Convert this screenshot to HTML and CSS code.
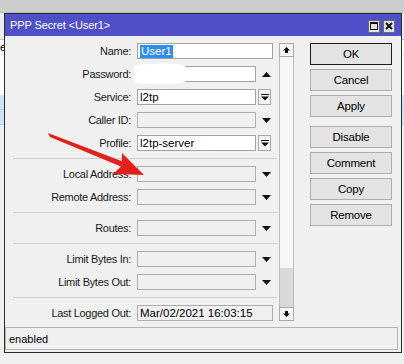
FILE: index.html
```html
<!DOCTYPE html>
<html lang="en">

<head>
  <meta charset="UTF-8">
  <meta name="viewport" content="width=device-width, initial-scale=1.0">
  <title>PPP Secret</title>
  <link rel="stylesheet" href="styles.css">
</head>

<body>

  <!-- ! desktop behind the dialog -->
  <div id="topbar"></div>
  <div id="backlist">
    <div class="bl-head"></div>
    <div class="bl-row"><span class="bl-cell">e</span></div>
    <div class="bl-gap"></div>
    <div class="bl-row blue"></div>
    <div class="bl-row blue"></div>
  </div>

  <!-- ! dialog -->
  <div id="window">
    <div id="titlebar">
      <span class="title">PPP Secret &lt;User1&gt;</span>
      <span class="title-buttons">
        <span class="tbtn">
          <svg width="8" height="8" viewBox="0 0 8 8">
            <rect x="0.5" y="0.5" width="7" height="7" fill="none" stroke="#111" stroke-width="1" />
            <rect x="0" y="0" width="8" height="2" fill="#111" />
          </svg>
        </span>
        <span class="tbtn">
          <svg width="8" height="8" viewBox="0 0 8 8">
            <path d="M1 1L7 7M7 1L1 7" stroke="#111" stroke-width="2" />
          </svg>
        </span>
      </span>
    </div>

    <div id="content">
      <div id="form">
        <div class="row">
          <label>Name:</label>
          <div class="field wide white"><span class="sel">User1</span></div>
        </div>
        <div class="row">
          <label>Password:</label>
          <div class="field white"></div>
          <span class="arrow"><svg width="9" height="5" viewBox="0 0 9 5"><path d="M4.5 0L9 5H0Z" /></svg></span>
        </div>
        <div class="row">
          <label>Service:</label>
          <div class="field white">l2tp</div>
          <span class="drop"><svg width="8" height="7" viewBox="0 0 8 7"><path d="M0 0H8V1H0ZM0 2.5H8L4 6.5Z" /></svg></span>
        </div>
        <div class="row">
          <label>Caller ID:</label>
          <div class="field"></div>
          <span class="arrow"><svg width="9" height="5" viewBox="0 0 9 5"><path d="M0 0H9L4.5 5Z" /></svg></span>
        </div>
        <div class="row">
          <label>Profile:</label>
          <div class="field white">l2tp-server</div>
          <span class="drop"><svg width="8" height="7" viewBox="0 0 8 7"><path d="M0 0H8V1H0ZM0 2.5H8L4 6.5Z" /></svg></span>
        </div>

        <div class="sep"></div>

        <div class="row">
          <label>Local Address:</label>
          <div class="field"></div>
          <span class="arrow"><svg width="9" height="5" viewBox="0 0 9 5"><path d="M0 0H9L4.5 5Z" /></svg></span>
        </div>
        <div class="row">
          <label>Remote Address:</label>
          <div class="field"></div>
          <span class="arrow"><svg width="9" height="5" viewBox="0 0 9 5"><path d="M0 0H9L4.5 5Z" /></svg></span>
        </div>

        <div class="sep"></div>

        <div class="row">
          <label>Routes:</label>
          <div class="field"></div>
          <span class="arrow"><svg width="9" height="5" viewBox="0 0 9 5"><path d="M0 0H9L4.5 5Z" /></svg></span>
        </div>

        <div class="sep"></div>

        <div class="row">
          <label>Limit Bytes In:</label>
          <div class="field"></div>
          <span class="arrow"><svg width="9" height="5" viewBox="0 0 9 5"><path d="M0 0H9L4.5 5Z" /></svg></span>
        </div>
        <div class="row">
          <label>Limit Bytes Out:</label>
          <div class="field"></div>
          <span class="arrow"><svg width="9" height="5" viewBox="0 0 9 5"><path d="M0 0H9L4.5 5Z" /></svg></span>
        </div>

        <div class="sep"></div>

        <div class="row">
          <label>Last Logged Out:</label>
          <div class="field wide">Mar/02/2021 16:03:15</div>
        </div>
      </div>

      <div id="scroll">
        <span class="sbtn"><svg width="7" height="6" viewBox="0 0 7 6"><path d="M3.5 0L7 3.5H5V6H2V3.5H0Z" /></svg></span>
        <span class="strack"></span>
        <span class="sthumb"></span>
        <span class="sbtn"><svg width="7" height="6" viewBox="0 0 7 6"><path d="M2 0H5V2.5H7L3.5 6L0 2.5H2Z" /></svg></span>
      </div>

      <div id="buttons">
        <span class="btn default">OK</span>
        <span class="btn">Cancel</span>
        <span class="btn">Apply</span>
        <span class="btn spaced">Disable</span>
        <span class="btn">Comment</span>
        <span class="btn">Copy</span>
        <span class="btn">Remove</span>
      </div>
    </div>

    <div id="status">enabled</div>
  </div>

  <!-- ! annotation drawn over the screenshot -->
  <svg id="annotation" width="404" height="364" viewBox="0 0 404 364">
    <path d="M134 66C150 63 172 63 182 65C190 67 190 80 183 83C170 85 150 84 134 83Z" fill="#fff" />
    <path d="M48 133L50 137L122 167L124 162Z" fill="#e3211c" />
    <path d="M144 175L122 153L121.5 166L113 174Z" fill="#e3211c" />
  </svg>

</body>

</html>
```

FILE: styles.css
```css
* {
  box-sizing: border-box;
}

html,
body {
  margin: 0;
  padding: 0;
  width: 100%;
  height: 100%;
  overflow: hidden;
}

body {
  position: relative;
  background-color: #f0f0f0;
  color: #000;
  font-family: "Liberation Sans", Arial, sans-serif;
  font-size: 11px;
}

/* desktop */

#topbar {
  height: 13px;
  background-color: #cdcdcd;
  border-bottom: 1px solid #bcbcbc;
}

#backlist {
  display: flex;
  flex-direction: column;
}

.bl-head {
  height: 27px;
  background-color: #ebebeb;
  border-bottom: 1px solid #c4c4c4;
}

.bl-row {
  height: 15px;
  display: flex;
  align-items: center;
  background-color: #fff;
  border-bottom: 1px solid #e2e2e2;
}

.bl-row.blue {
  background-color: #cde3f7;
  border-bottom-color: #b7d3ec;
}

.bl-cell {
  padding-left: 0;
}

.bl-gap {
  height: 40px;
  background-color: #fff;
}

/* dialog window */

#window {
  position: absolute;
  left: 4px;
  top: 13px;
  width: 398px;
  height: 340px;
  display: flex;
  flex-direction: column;
  background-color: #f0f0f0;
  border: 1px solid #2a2a2a;
}

#titlebar {
  height: 22px;
  flex-shrink: 0;
  display: flex;
  align-items: center;
  justify-content: space-between;
  padding: 0 6px 0 5px;
  background-color: #4f4fc8;
  color: #fff;
  font-size: 11px;
  letter-spacing: -0.1px;
}

.title-buttons {
  display: flex;
  gap: 3px;
  margin-top: 2px;
}

.tbtn {
  width: 12px;
  height: 13px;
  display: inline-flex;
  align-items: center;
  justify-content: center;
  background-color: #e2e2e2;
  border: 1px solid #6a6a6a;
}

#content {
  flex: 1;
  display: flex;
  align-items: flex-start;
  padding-top: 7px;
}

/* form */

#form {
  width: 272px;
  display: flex;
  flex-direction: column;
  gap: 7px;
}

.row {
  height: 16px;
  display: flex;
  align-items: center;
}

.row label {
  width: 126px;
  text-align: right;
  white-space: nowrap;
  letter-spacing: -0.3px;
  color: #1a1a1a;
}

.field {
  width: 119px;
  height: 16px;
  margin-left: 6px;
  padding-left: 2px;
  display: flex;
  align-items: center;
  white-space: nowrap;
  background-color: #f0f0f0;
  border: 1px solid #adadad;
  font-size: 11.5px;
}

.field.white {
  background-color: #fff;
  border-color: #a2a2a2;
}

.field.wide {
  width: 136px;
}

.sel {
  padding: 0 1px;
  line-height: 13px;
  background-color: #2f8cf0;
  color: #fff;
}

.arrow,
.drop {
  width: 13px;
  height: 16px;
  margin-left: 2px;
  display: inline-flex;
  align-items: center;
  justify-content: center;
}

.arrow {
  padding-left: 3px;
}

.drop {
  background-color: #f4f4f4;
  border: 1px solid #a8a8a8;
}

.arrow svg,
.drop svg,
.sbtn svg {
  fill: #111;
}

.sep {
  height: 1px;
  width: 264px;
  margin-left: 8px;
  background-color: #cfcfcf;
}

/* scroll bar */

#scroll {
  width: 15px;
  height: 278px;
  margin-left: 2px;
  display: flex;
  flex-direction: column;
}

.sbtn {
  height: 14px;
  display: flex;
  align-items: center;
  justify-content: center;
  background-color: #f7f7f7;
  border: 1px solid #a9a9a9;
}

.strack {
  height: 211px;
  background-color: #f6f6f6;
  border-left: 1px solid #bdbdbd;
  border-right: 1px solid #bdbdbd;
}

.sthumb {
  height: 39px;
  background-color: #d9d9d9;
  border-left: 1px solid #bdbdbd;
  border-right: 1px solid #bdbdbd;
}

/* buttons */

#buttons {
  width: 82px;
  margin-left: 16px;
  display: flex;
  flex-direction: column;
  gap: 4px;
}

.btn {
  height: 22px;
  display: flex;
  align-items: center;
  justify-content: center;
  background-color: #e3e3e3;
  border: 1px solid #adadad;
  font-size: 11.5px;
  letter-spacing: -0.2px;
}

.btn.default {
  border-color: #1c1c1c;
}

.btn.spaced {
  margin-top: 5px;
}

/* status */

#status {
  height: 23px;
  flex-shrink: 0;
  margin: 0 3px 2px 0;
  padding-left: 3px;
  display: flex;
  align-items: center;
  border: 1px solid #b4b4b4;
}

#annotation {
  position: absolute;
  left: 0;
  top: 0;
  pointer-events: none;
}
```
